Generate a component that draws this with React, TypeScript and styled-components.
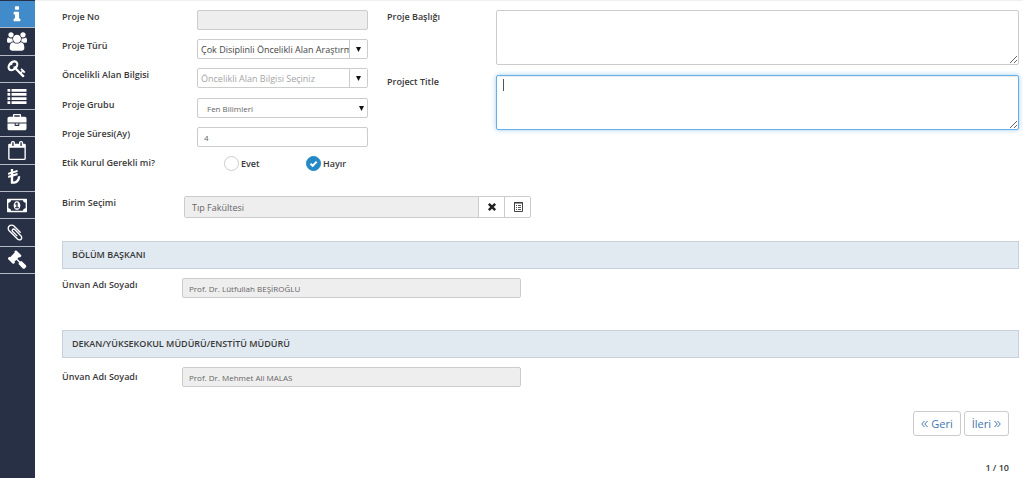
import React from "react";
import styled, { createGlobalStyle, css } from "styled-components";

const GlobalStyle = createGlobalStyle`
  *, *::before, *::after { box-sizing: border-box; }
  body {
    margin: 0;
    background: #fff;
    color: #393939;
    font-family: "Open Sans", "Noto Sans", sans-serif;
    font-size: 9px;
  }
  button, input, select, textarea { font-family: inherit; }
`;

const Page = styled.div`
  display: flex;
  min-height: 100vh;
`;

const Sidebar = styled.nav`
  flex: none;
  width: 35px;
  padding-top: 1px;
  background: #283045;
`;

const NavList = styled.ul`
  display: flex;
  flex-direction: column;
  height: 273px;
  margin: 0;
  padding: 0;
  list-style: none;
`;

const NavItem = styled.li`
  display: flex;
  flex: 1;
  border-bottom: 1px solid #b4bac4;
`;

const NavLink = styled.a<{ $active?: boolean }>`
  display: flex;
  flex: 1;
  align-items: center;
  padding-left: 7px;
  color: #fff;
  background: ${(p) => (p.$active ? "#428bca" : "#283045")};
`;

const NavIcon = styled.svg`
  width: 20px;
  height: 19px;
  fill: currentColor;
`;

const Main = styled.main`
  flex: 1;
  min-width: 0;
  padding: 9px 4px 3px 27px;
  border-top: 1px solid #f0f0f0;
`;

const FormColumns = styled.div`
  display: grid;
  grid-template-columns: 306px minmax(0, 1fr);
  column-gap: 19px;
`;

const Column = styled.div``;

const labelText = css`
  font-size: 9px;
  font-weight: 600;
  line-height: 14px;
`;

const Row = styled.div<{ $label: number; $height: number }>`
  display: grid;
  grid-template-columns: ${(p) => p.$label}px minmax(0, 1fr);
  align-items: start;
  height: ${(p) => p.$height}px;
`;

const Label = styled.label`
  ${labelText}
`;

const controlBox = css`
  border: 1px solid #ccc;
  border-radius: 2px;
  background: #fff;
  color: #666;
`;

const TextInput = styled.input`
  ${controlBox}
  width: 100%;
  height: 20px;
  padding: 0 6px;
  font-size: 8px;
  outline: none;
  &:read-only { background: #eee; }
`;

const Select = styled.select`
  ${controlBox}
  width: 100%;
  height: 20px;
  padding: 0 9px;
  font-size: 8px;
  appearance: none;
`;

const SelectWrap = styled.div`
  position: relative;
`;

const SelectArrow = styled.svg`
  position: absolute;
  right: 4px;
  top: 7px;
  width: 5px;
  height: 6px;
  pointer-events: none;
`;

const Combo = styled.div`
  ${controlBox}
  display: flex;
  height: 20px;
  overflow: hidden;
`;

const ComboInput = styled.input`
  flex: 1;
  min-width: 0;
  padding: 0 0 0 3px;
  border: 0;
  background: none;
  color: #444;
  font-size: 9px;
  outline: none;
  &::placeholder { color: #a5a5a5; }
`;

const ComboButton = styled.button`
  display: flex;
  align-items: center;
  justify-content: center;
  width: 18px;
  padding: 0;
  border: 0;
  border-left: 1px solid #ccc;
  background: #fff;
`;

const ArrowIcon = styled.svg`
  width: 5px;
  height: 6px;
`;

const RadioGroup = styled.fieldset`
  display: flex;
  margin: 0;
  padding: 0;
  border: 0;
`;

const Legend = styled.legend`
  ${labelText}
  float: left;
  width: 162px;
  padding: 0;
`;

const Options = styled.div`
  display: flex;
`;

const Option = styled.label`
  ${labelText}
  display: flex;
  flex: none;
  align-items: center;
  gap: 2px;
  width: 82px;
`;

const Radio = styled.input`
  flex: none;
  width: 15px;
  height: 15px;
  margin: 0;
  appearance: none;
  border: 1px solid #ccc;
  border-radius: 50%;
  background: #fff;
  &:checked {
    border-color: #2489c5;
    background: #2489c5 url("data:image/svg+xml,%3Csvg xmlns='http://www.w3.org/2000/svg' viewBox='0 0 13 13'%3E%3Cpath d='M3.5 6.7l2.2 2.1 4-4.2' fill='none' stroke='white' stroke-width='2'/%3E%3C/svg%3E") center / 13px 13px no-repeat;
  }
`;

const AreaWrap = styled.div`
  position: relative;
`;

const TextArea = styled.textarea<{ $focused?: boolean }>`
  ${controlBox}
  display: block;
  width: 100%;
  height: 55px;
  padding: 3px 7px;
  font-size: 9px;
  outline: none;
  ${(p) =>
    p.$focused &&
    css`
      border-color: #66afe9;
      box-shadow: inset 0 1px 1px rgba(0, 0, 0, 0.075), 0 0 5px rgba(102, 175, 233, 0.6);
    `}
`;

const Caret = styled.span`
  position: absolute;
  top: 4px;
  left: 7px;
  width: 1px;
  height: 12px;
  background: #555;
`;

const UnitRow = styled.div`
  display: grid;
  grid-template-columns: 122px 347px;
  align-items: start;
  margin-top: 25px;
`;

const InputGroup = styled.div`
  ${controlBox}
  display: flex;
  height: 22px;
  overflow: hidden;
`;

const UnitInput = styled.input`
  flex: 1;
  min-width: 0;
  padding: 0 7px;
  border: 0;
  background: #eee;
  color: #666;
  font-size: 9px;
  outline: none;
`;

const GroupButton = styled.button`
  display: flex;
  align-items: center;
  justify-content: center;
  width: 26px;
  padding: 0;
  border: 0;
  border-left: 1px solid #ccc;
  background: #fff;
`;

const GroupIcon = styled.svg`
  width: 10px;
  height: 10px;
`;

const Section = styled.section`
  margin-top: 23px;
  & + & { margin-top: 32px; }
`;

const SectionTitle = styled.h2`
  height: 28px;
  margin: 0 0 9px;
  padding: 0 9px;
  border: 1px solid #c9cfdb;
  background: #e1eaf1;
  font-size: 9px;
  font-weight: 600;
  line-height: 25px;
`;

const PersonRow = styled.div<{ $align: "start" | "center" }>`
  display: grid;
  grid-template-columns: 120px 339px;
  align-items: ${(p) => p.$align};
`;

const Pager = styled.div`
  display: flex;
  justify-content: flex-end;
  gap: 3px;
  margin-top: 24px;
  padding-right: 10px;
`;

const PagerButton = styled.button`
  display: flex;
  align-items: center;
  justify-content: center;
  gap: 3px;
  height: 25px;
  padding: 0 7px;
  border: 1px solid #ccc;
  border-radius: 3px;
  background: #fff;
  color: #4076ae;
  font-size: 11px;
`;

const Chevrons = styled.svg`
  width: 7px;
  height: 8px;
  fill: none;
  stroke: currentColor;
  stroke-width: 1;
`;

const PageCount = styled.p`
  margin: 25px 10px 0 0;
  font-size: 9px;
  font-weight: 600;
  line-height: 14px;
  text-align: right;
`;

type IconDef = { label: string; box?: string; d: string };

const icons: IconDef[] = [
  {
    label: "Genel Bilgiler",
    box: "-576 0 1792 1792",
    d: "M640 1344v128q0 26-19 45t-45 19h-512q-26 0-45-19t-19-45v-128q0-26 19-45t45-19h64v-384h-64q-26 0-45-19t-19-45v-128q0-26 19-45t45-19h384q26 0 45 19t19 45v576h64q26 0 45 19t19 45zm-128-1152v192q0 26-19 45t-45 19h-256q-26 0-45-19t-19-45v-192q0-26 19-45t45-19h256q26 0 45 19t19 45z",
  },
  {
    label: "Ekip",
    box: "64 0 1920 1792",
    d: "M657 896q-162 5-265 128h-134q-82 0-138-40.5t-56-118.5q0-353 124-353 6 0 43.5 21t97.5 42.5 119 21.5q67 0 133-23-5 37-5 66 0 139 81 256zm1071 637q0 120-73 189.5t-194 69.5h-874q-121 0-194-69.5t-73-189.5q0-53 3.5-103.5t14-109 26.5-108.5 43-97.5 62-81 85.5-53.5 111.5-20q10 0 43 21.5t73 48 107 48 135 21.5 135-21.5 107-48 73-48 43-21.5q61 0 111.5 20t85.5 53.5 62 81 43 97.5 26.5 108.5 14 109 3.5 103.5zm-1024-1277q0 106-75 181t-181 75-181-75-75-181 75-181 181-75 181 75 75 181zm704 384q0 159-112.5 271.5t-271.5 112.5-271.5-112.5-112.5-271.5 112.5-271.5 271.5-112.5 271.5 112.5 112.5 271.5zm576 225q0 78-56 118.5t-138 40.5h-134q-103-123-265-128 81-117 81-256 0-29-5-66 66 23 133 23 59 0 119-21.5t97.5-42.5 43.5-21q124 0 124 353zm-128-609q0 106-75 181t-181 75-181-75-75-181 75-181 181-75 181 75 75 181z",
  },
  {
    label: "Anahtar Kelimeler",
    d: "M832 512q0-80-56-136t-136-56-136 56-56 136q0 42 19 83-41-19-83-19-80 0-136 56t-56 136 56 136 136 56 136-56 56-136q0-42-19-83 41 19 83 19 80 0 136-56t56-136zm851 704q0 17-49 66t-66 49q-9 0-28.5-16t-36.5-33-38.5-40-24.5-26l-96 96 220 220q28 28 28 68 0 42-39 81t-81 39q-40 0-68-28l-671-671q-176 131-365 131-163 0-265.5-102.5t-102.5-265.5q0-160 95-313t248-248 313-95q163 0 265.5 102.5t102.5 265.5q0 189-131 365l355 355 96-96q-3-3-26-24.5t-40-38.5-33-36.5-16-28.5q0-17 49-66t66-49q13 0 23 10 6 6 46 44.5t82 79.5 86.5 86 73 78 28.5 41z",
  },
  {
    label: "Liste",
    d: "M0 192h256v256H0zM384 192h1408v256H384zM0 576h256v256H0zM384 576h1408v256H384zM0 960h256v256H0zM384 960h1408v256H384zM0 1344h256v256H0zM384 1344h1408v256H384z",
  },
  {
    label: "Çalışma",
    d: "M640 256h512v-128h-512v128zm1152 640v480q0 66-47 113t-113 47h-1472q-66 0-113-47t-47-113v-480h672v160q0 26 19 45t45 19h320q26 0 45-19t19-45v-160h672zm-768 0v128h-256v-128h256zm768-480v384h-1792v-384q0-66 47-113t113-47h352v-160q0-40 28-68t68-28h576q40 0 68 28t28 68v160h352q66 0 113 47t47 113z",
  },
  {
    label: "Takvim",
    d: "M192 1664h1408v-1024h-1408v1024zm384-1216v-288q0-14-9-23t-23-9h-64q-14 0-23 9t-9 23v288q0 14 9 23t23 9h64q14 0 23-9t9-23zm768 0v-288q0-14-9-23t-23-9h-64q-14 0-23 9t-9 23v288q0 14 9 23t23 9h64q14 0 23-9t9-23zm384-64v1280q0 52-38 90t-90 38h-1408q-52 0-90-38t-38-90v-1280q0-52 38-90t90-38h128v-96q0-66 47-113t113-47h64q66 0 113 47t47 113v96h384v-96q0-66 47-113t113-47h64q66 0 113 47t47 113v96h128q52 0 90 38t38 90z",
  },
  {
    label: "Bütçe",
    box: "320 0 1792 1792",
    d: "M1504 896q0 159-78 294t-212.5 213-294 78h-256q-14 0-23-9t-9-23v-587l-215 66q-3 1-9 1-10 0-19-6-13-10-13-26v-128q0-23 23-31l233-71v-93l-215 66q-3 1-9 1-10 0-19-6-13-10-13-26v-128q0-23 23-31l233-71v-250q0-14 9-23t23-9h160q14 0 23 9t9 23v181l375-116q15-5 28 5t13 26v128q0 23-23 31l-393 121v93l375-116q15-5 28 5t13 26v128q0 23-23 31l-393 121v487q188-13 318-151t130-328q0-14 9-23t23-9h160q14 0 23 9t9 23z",
  },
  {
    label: "Ödemeler",
    box: "-64 0 1920 1792",
    d: "M704 1152h384v-96h-128v-448h-114l-148 137 77 80q42-37 55-57h2v288h-128v96zm512-256q0 70-21 142t-59.5 134-101.5 101-138 39-138-39-101.5-101-59.5-134-21-142 21-142 59.5-134 101.5-101 138-39 138 39 101.5 101 59.5 134 21 142zm512 256v-512q-106 0-181-75t-75-181h-1152q0 106-75 181t-181 75v512q106 0 181 75t75 181h1152q0-106 75-181t181-75zm128-832v1152q0 26-19 45t-45 19h-1792q-26 0-45-19t-19-45v-1152q0-26 19-45t45-19h1792q26 0 45 19t19 45z",
  },
  {
    label: "Ekler",
    box: "192 0 1792 1792",
    d: "M1596 1385q0 117-79 196t-196 79q-135 0-235-100l-777-776q-113-115-113-271 0-159 110-270t269-111q158 0 273 113l605 606q10 10 10 22 0 16-30.5 46.5t-46.5 30.5q-13 0-23-10l-606-607q-79-77-181-77-106 0-179 75t-73 181q0 105 76 181l776 777q63 63 145 63 64 0 106-42t42-106q0-82-63-145l-581-581q-26-24-60-24-29 0-48 19t-19 48q0 32 25 59l410 410q10 10 10 22 0 16-31 47t-47 31q-12 0-22-10l-410-410q-63-61-63-149 0-82 57-139t139-57q88 0 149 63l581 581q100 98 100 235z",
  },
  {
    label: "Karar",
    d: "M1771 1536q0 53-37 90l-107 108q-39 37-91 37-53 0-90-37l-363-364q-38-36-38-90 0-53 43-96l-256-256-126 126q-14 14-34 14t-34-14q2 2 12.5 12t12.5 13 10 11.5 10 13.5 6 13.5 5.5 16.5 1.5 18q0 38-28 68-3 3-16.5 18t-19 20.5-18.5 16.5-22 15.5-22 9-26 4.5q-40 0-68-28l-408-408q-28-28-28-68 0-13 4.5-26t9-22 15.5-22 16.5-18.5 20.5-19 18-16.5q30-28 68-28 10 0 18 1.5t16.5 5.5 13.5 6 13.5 10 11.5 10 13 12.5 12 12.5q-14-14-14-34t14-34l348-348q14-14 34-14t34 14q-2-2-12.5-12t-12.5-13-10-11.5-10-13.5-6-13.5-5.5-16.5-1.5-18q0-38 28-68 3-3 16.5-18t19-20.5 18.5-16.5 22-15.5 22-9 26-4.5q40 0 68 28l408 408q28 28 28 68 0 13-4.5 26t-9 22-15.5 22-16.5 18.5-20.5 19-18 16.5q-30 28-68 28-10 0-18-1.5t-16.5-5.5-13.5-6-13.5-10-11.5-10-13-12.5-12-12.5q14 14 14 34t-14 34l-126 126 256 256q43-43 96-43 52 0 91 37l363 363q37 39 37 91z",
  },
];

const Triangle = () => <path d="M0 1h5L2.5 6z" fill="#111" />;

function ComboBox({ id, value, placeholder }: { id: string; value?: string; placeholder?: string }) {
  return (
    <Combo>
      <ComboInput id={id} type="text" defaultValue={value} placeholder={placeholder} />
      <ComboButton type="button" aria-label="Seçenekleri aç">
        <ArrowIcon viewBox="0 0 5 6" aria-hidden="true"><Triangle /></ArrowIcon>
      </ComboButton>
    </Combo>
  );
}

type PersonProps = { id: string; title: string; name: string; align?: "start" | "center" };

function Person({ id, title, name, align = "start" }: PersonProps) {
  return (
    <Section>
      <SectionTitle>{title}</SectionTitle>
      <PersonRow $align={align}>
        <Label htmlFor={id}>Ünvan Adı Soyadı</Label>
        <TextInput id={id} readOnly value={name} />
      </PersonRow>
    </Section>
  );
}

export default function App() {
  return (
    <Page>
      <GlobalStyle />
      <Sidebar aria-label="Adımlar">
        <NavList>
          {icons.map((icon, i) => (
            <NavItem key={icon.label}>
              <NavLink href="#" aria-label={icon.label} $active={i === 0}>
                <NavIcon viewBox={icon.box ?? "0 0 1792 1792"} aria-hidden="true">
                  <path d={icon.d} />
                </NavIcon>
              </NavLink>
            </NavItem>
          ))}
        </NavList>
      </Sidebar>
      <Main>
        <FormColumns>
          <Column>
            <Row $label={135} $height={29}>
              <Label htmlFor="no">Proje No</Label>
              <TextInput id="no" readOnly value="" />
            </Row>
            <Row $label={135} $height={29}>
              <Label htmlFor="type">Proje Türü</Label>
              <ComboBox id="type" value="Çok Disiplinli Öncelikli Alan Araştırma Projesi" />
            </Row>
            <Row $label={135} $height={30}>
              <Label htmlFor="area">Öncelikli Alan Bilgisi</Label>
              <ComboBox id="area" placeholder="Öncelikli Alan Bilgisi Seçiniz" />
            </Row>
            <Row $label={135} $height={29}>
              <Label htmlFor="group">Proje Grubu</Label>
              <SelectWrap>
                <Select id="group">
                  <option>Fen Bilimleri</option>
                </Select>
                <SelectArrow viewBox="0 0 5 6" aria-hidden="true"><Triangle /></SelectArrow>
              </SelectWrap>
            </Row>
            <Row $label={135} $height={29}>
              <Label htmlFor="months">Proje Süresi(Ay)</Label>
              <TextInput id="months" defaultValue="4" />
            </Row>
            <RadioGroup>
              <Legend>Etik Kurul Gerekli mi?</Legend>
              <Options>
                <Option><Radio type="radio" name="ethics" />Evet</Option>
                <Option><Radio type="radio" name="ethics" defaultChecked />Hayır</Option>
              </Options>
            </RadioGroup>
          </Column>
          <Column>
            <Row $label={109} $height={65}>
              <Label htmlFor="title-tr">Proje Başlığı</Label>
              <TextArea id="title-tr" />
            </Row>
            <Row $label={109} $height={65}>
              <Label htmlFor="title-en">Project Title</Label>
              <AreaWrap>
                <TextArea id="title-en" $focused />
                <Caret />
              </AreaWrap>
            </Row>
          </Column>
        </FormColumns>
        <UnitRow>
          <Label htmlFor="unit">Birim Seçimi</Label>
          <InputGroup>
            <UnitInput id="unit" readOnly value="Tıp Fakültesi" />
            <GroupButton type="button" aria-label="Temizle">
              <GroupIcon viewBox="0 0 10 10" aria-hidden="true">
                <path d="M1.8 1.8l6.4 6.4M8.2 1.8L1.8 8.2" fill="none" stroke="#222" strokeWidth="2.4" />
              </GroupIcon>
            </GroupButton>
            <GroupButton type="button" aria-label="Birim seç">
              <GroupIcon viewBox="0 0 10 10" aria-hidden="true">
                <path d="M1.5.5h8v9h-8z" fill="none" stroke="#444" />
                <path d="M1 1h9" stroke="#333" />
                <path d="M3 3.5h1M3 5.5h1M3 7.5h1M5 3.5h3M5 5.5h3M5 7.5h3" fill="none" stroke="#555" />
              </GroupIcon>
            </GroupButton>
          </InputGroup>
        </UnitRow>
        <Person id="head" title="BÖLÜM BAŞKANI" name="Prof. Dr. Lütfullah BEŞİROĞLU" />
        <Person
          id="dean"
          title="DEKAN/YÜKSEKOKUL MÜDÜRÜ/ENSTİTÜ MÜDÜRÜ"
          name="Prof. Dr. Mehmet Ali MALAS"
          align="center"
        />
        <Pager>
          <PagerButton type="button">
            <Chevrons viewBox="0 0 7 8" aria-hidden="true"><path d="M3.5 1L.7 4l2.8 3M6.5 1L3.7 4l2.8 3" /></Chevrons>
            Geri
          </PagerButton>
          <PagerButton type="button">
            İleri
            <Chevrons viewBox="0 0 7 8" aria-hidden="true"><path d="M.5 1l2.8 3L.5 7M3.5 1l2.8 3-2.8 3" /></Chevrons>
          </PagerButton>
        </Pager>
        <PageCount>1 / 10</PageCount>
      </Main>
    </Page>
  );
}
